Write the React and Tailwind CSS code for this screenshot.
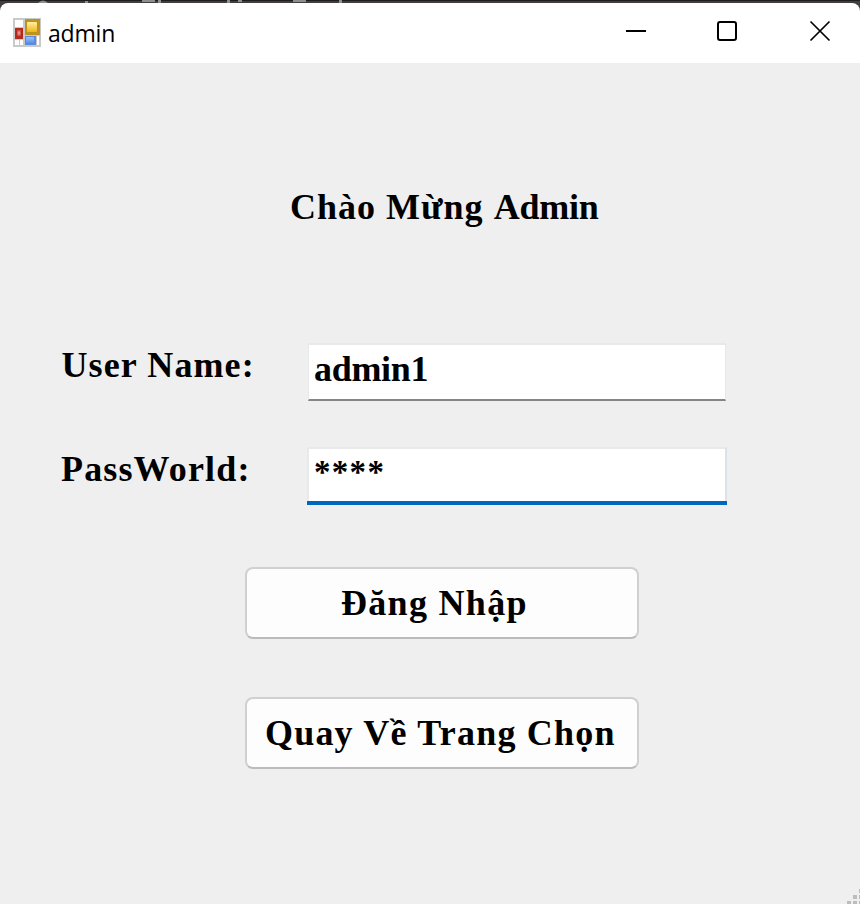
const serif = "font-['Liberation_Serif',serif] leading-[40px] font-bold text-black whitespace-pre";

function FormIcon() {
  return (
    <svg width="28" height="29" viewBox="0 0 28 29" className="shrink-0">
      <defs>
        <linearGradient id="gold" x1="0" y1="0" x2="0" y2="1">
          <stop offset="0" stopColor="#fff0a0" />
          <stop offset="1" stopColor="#f2b416" />
        </linearGradient>
        <linearGradient id="blue" x1="0" y1="0" x2="0" y2="1">
          <stop offset="0" stopColor="#9cc2fa" />
          <stop offset="1" stopColor="#5a90ea" />
        </linearGradient>
        <radialGradient id="red">
          <stop offset="0" stopColor="#f5b0a8" />
          <stop offset="1" stopColor="#cc4438" />
        </radialGradient>
      </defs>
      <rect width="28" height="29" fill="#c9c9c9" />
      <rect x="2" y="2" width="8" height="7" fill="#fff" />
      <rect x="2" y="22" width="4" height="5" fill="#fff" />
      <rect x="7" y="22" width="3" height="5" fill="#fff" />
      <rect x="24" y="18" width="2" height="9" fill="#fff" />
      <rect x="12" y="1" width="15" height="16" fill="#bd921f" />
      <rect x="14" y="4" width="10" height="10" rx="1" fill="url(#gold)" />
      <rect x="2" y="10" width="8" height="11" fill="#b02a20" />
      <rect x="4" y="12" width="4" height="6" fill="url(#red)" />
      <rect x="12" y="18" width="11" height="9" fill="#5b8be0" />
      <rect x="13" y="19" width="8" height="6" rx="1" fill="url(#blue)" />
    </svg>
  );
}

export default function App() {
  return (
    <div className="h-[904px] w-[860px] overflow-hidden bg-[#efefef]">
      <div className="bg-[#403e3f]">
        <svg width="860" height="3" className="block">
          <rect width="860" height="1" fill="#1f1d1e" />
          <g fill="#8f8f8f">
            <path d="M38 3q5-5 10 0z" />
            <rect x="85" y="1" width="3" height="2" />
            <rect x="142" y="0" width="13" height="2" />
            <rect x="158" y="0" width="3" height="3" />
            <rect x="227" y="0" width="3" height="3" />
            <rect x="238" y="0" width="4" height="2" />
            <rect x="293" y="0" width="13" height="2" />
            <rect x="339" y="0" width="3" height="3" />
          </g>
        </svg>
        <header className="flex h-[60px] rounded-t-[8px] bg-white pl-[13px]">
          <div className="flex pt-[15px]">
            <FormIcon />
            <span className="ml-[7px] -mt-px font-['Open_Sans',sans-serif] text-[23px] leading-[32px] tracking-[-0.2px] text-black">admin</span>
          </div>
          <svg width="260" height="60" viewBox="600 3 260 60" className="ml-auto" fill="none" stroke="#000" strokeWidth="2">
            <path d="M626 31h20" />
            <rect x="718" y="22" width="18" height="18" rx="2" />
            <path d="M810.5 21.500l19 19M829.500 21.500l-19 19" strokeWidth="1.700" />
          </svg>
        </header>
      </div>
      <main className="flex h-[841px] flex-col">
        <h1 className={`${serif} ml-[290px] mt-[124px] text-[36px] tracking-[1px]`}>
          Chào Mừng <span className="tracking-[-0.2px]">Admin</span>
        </h1>
        <div className="mt-[116px] flex h-[58px] items-start">
          <label className={`${serif} ml-[61.500px] mt-[2px] w-[246.500px] shrink-0 text-[36px] tracking-[1.1px]`}>User Name:</label>
          <div className="h-[58px] w-[418px] border-x border-t-2 border-b-2 border-x-[#e8e8e8] border-t-[#e9e9e9] border-b-[#858585] bg-white pl-[5px] pt-[4px]">
            <span className={`${serif} text-[36px] tracking-[-0.3px]`}>admin1</span>
          </div>
        </div>
        <div className="mt-[46px] flex h-[58px] items-start">
          <label className={`${serif} ml-[61px] mt-[2px] w-[246px] shrink-0 text-[36px] tracking-[1.15px]`}>PassWorld:</label>
          <div className="h-[58px] w-[420px] border-b-4 border-[#0067c0]">
            <div className="h-[54px] border-x-2 border-t-2 border-l-[#e9e9e9] border-r-[#dbe2e8] border-t-[#e9e9e9] bg-white pl-[5px] pt-[3px]">
              <span className={`${serif} text-[33px] tracking-[1.3px]`}>****</span>
            </div>
          </div>
        </div>
        <button className={`${serif} ml-[245px] mt-[62px] flex h-[72px] w-[394px] rounded-[8px] border-2 border-[#d0d0d0] border-b-[#bbbbbb] bg-[#fdfdfd] pl-[94px] pt-[14px] text-[36px] tracking-[1.3px]`}>Đăng Nhập</button>
        <button className={`${serif} ml-[245px] mt-[58px] flex h-[72px] w-[394px] rounded-[8px] border-2 border-[#d0d0d0] border-b-[#bbbbbb] bg-[#fdfdfd] pl-[18px] pt-[14px] text-[36px] tracking-[1.2px]`}>Quay Về Trang Chọn</button>
        <svg width="14" height="15" className="ml-auto mt-auto" fill="#bdbdbd">
          <rect x="13" y="0" width="1" height="4" />
          <rect x="7" y="6" width="4" height="4" />
          <rect x="13" y="6" width="1" height="4" />
          <rect x="1" y="12" width="4" height="3" />
          <rect x="7" y="12" width="4" height="3" />
          <rect x="13" y="12" width="1" height="3" />
        </svg>
      </main>
    </div>
  );
}
